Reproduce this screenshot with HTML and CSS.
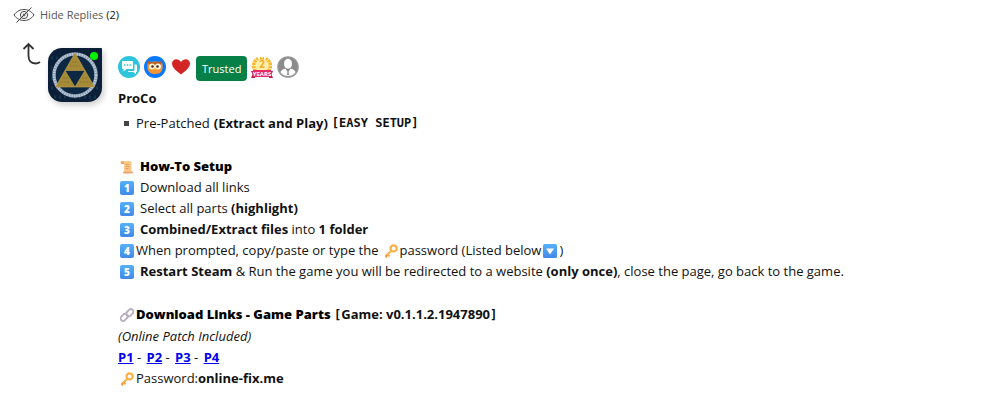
FILE: index.html
```html
<!DOCTYPE html>
<html lang="en">
<head>
  <meta charset="UTF-8">
  <meta name="viewport" content="width=device-width, initial-scale=1.0">
  <title>Replies</title>
  <link rel="stylesheet" href="styles.css">
</head>
<body>
  <!-- Shared icons -->
  <svg class="defs" width="0" height="0" aria-hidden="true">
    <defs>
      <linearGradient id="blue" x1="0" y1="0" x2="0" y2="1">
        <stop offset="0" stop-color="#56b0fa"/>
        <stop offset="1" stop-color="#4189e8"/>
      </linearGradient>
      <linearGradient id="gold" x1="1" y1="0" x2="0" y2="1">
        <stop offset="0" stop-color="#ffc83d"/>
        <stop offset="1" stop-color="#ee9548"/>
      </linearGradient>
      <symbol id="key" viewBox="0 0 14 14">
        <path d="M8 6 1.5 12.5M3.6 10.4l2 2M1.6 12.2l1.6 1" fill="none" stroke="url(#gold)" stroke-width="2"/>
        <circle cx="9.6" cy="4.4" r="3.1" fill="none" stroke="#fbb045" stroke-width="2.2"/>
      </symbol>
    </defs>
  </svg>

  <button class="hide-replies" type="button">
    <svg width="22" height="18" viewBox="0 0 22 18" fill="none" stroke="#444" stroke-width="1">
      <path d="M1 9C4 5 7.200 3.500 11 3.500s7 1.500 10 5.500c-3 4-6.200 5.500-10 5.500S4 13 1 9Z"/>
      <circle cx="11" cy="9" r="3.600"/>
      <circle cx="11" cy="9" r="1"/>
      <path d="M3.500 16.500 18.500 1.500"/>
    </svg>
    <span>Hide Replies <span class="count">(2)</span></span>
  </button>

  <div class="reply">
    <svg class="reply-arrow" width="20" height="24" viewBox="0 0 20 24" fill="none" stroke="#333" stroke-width="1.800">
      <path d="M6.500 2v12q0 7 7 7.500 2.500 0 4.500-1.500M1.500 7l5-5 5 5"/>
    </svg>

    <div class="avatar">
      <svg width="54" height="54" viewBox="0 0 54 54">
        <rect width="54" height="54" fill="#0b2038"/>
        <path d="M3 10h48M3 20h48M3 30h48M3 40h48M6 49h42" fill="none" stroke="#15354f" stroke-width="3" stroke-dasharray="2 3"/>
        <circle cx="27" cy="27" r="21" fill="#0d2843" stroke="#8598ad" stroke-width="3.500"/>
        <circle cx="27" cy="27" r="21" fill="none" stroke="#bccad8" stroke-width="2.500" stroke-dasharray="1.500 1"/>
        <path d="M27 5 17 22.500h20zM17 22.500 7.500 39H27zM37 22.500 27 39h19.500z" fill="#a58a38" stroke="#c4a34a" stroke-width=".6"/>
        <path d="M24 14h6M22 18h10M15 30h5M13 34h9M34 30h6M32 34h10" stroke="#8a7434" stroke-dasharray="2 1"/>
      </svg>
      <span class="online"></span>
    </div>

    <div class="content">
      <div class="badges">
        <svg width="22" height="22" viewBox="0 0 22 22">
          <circle cx="11" cy="11" r="11" fill="#2ec4dc"/>
          <path d="M16.500 8.500h1.500q1 0 1 1V15q0 1-1 1v2.500L15.500 16H11q-1 0-1-1h5.500q1 0 1-1z" fill="#fff"/>
          <path d="M5 5h9q1 0 1 1v6q0 1-1 1H8.500L5.500 15.500V13H5q-1 0-1-1V6q0-1 1-1Z" fill="#fff"/>
          <path d="M6 9h1.500M8.800 9h1.500M11.600 9h1.500" stroke="#2ec4dc" stroke-width="1.500"/>
        </svg>
        <svg width="22" height="22" viewBox="0 0 22 22">
          <circle cx="11" cy="11" r="11" fill="#0879fa"/>
          <path d="M4 6q7-1 14 0 1 3 .5 6.500-1 5.500-7.500 5.500T3.500 12.500Q3 9 4 6Z" fill="#f49432"/>
          <path d="M3.500 5q7.500 2.500 15 0L17 9H5z" fill="#b85e22"/>
          <circle cx="8" cy="10.500" r="3" fill="#fff4d8"/>
          <circle cx="14" cy="10.500" r="3" fill="#fff4d8"/>
          <circle cx="8.500" cy="10.500" r="1.300" fill="#4b2b1b"/>
          <circle cx="13.500" cy="10.500" r="1.300" fill="#4b2b1b"/>
          <path d="m10 12.500 1 2 1-2z" fill="#ffd75c"/>
        </svg>
        <svg class="heart" width="18" height="22" viewBox="0 0 18 22">
          <path d="M9 18.500C5 15 0 12 0 7.500 0 3 6 1.500 9 6c3-4.500 9-3 9 1.500 0 4.500-5 7.500-9 11Z" fill="#d32525"/>
        </svg>
        <span class="trusted">Trusted</span>
        <svg width="22" height="22" viewBox="0 0 22 22">
          <circle cx="11" cy="9.500" r="7" fill="#fff0a8"/>
          <path d="M4.500 15A8.200 8.200 0 0 1 7 2.500M17.500 15A8.200 8.200 0 0 0 15 2.500" fill="none" stroke="#f9b92a" stroke-width="3.500" stroke-dasharray="2.500 .6"/>
          <path d="m9 .5 2 1.500 2-1.500v3H9z" fill="#f9b51e"/>
          <text class="medal-number" x="11" y="12" text-anchor="middle">2</text>
          <path d="M0 15h4v7H0l1.500-3.500zM22 15h-4v7h4l-1.500-3.500z" fill="#b81f55"/>
          <path d="M2 14h18v7H2z" fill="#ea2866"/>
          <text class="medal-years" x="11" y="20" text-anchor="middle">YEARS</text>
        </svg>
        <svg width="22" height="22" viewBox="0 0 22 22">
          <circle cx="11" cy="11" r="10.200" fill="#8b8b8b" stroke="#999" stroke-width="1.200"/>
          <ellipse cx="11" cy="7.800" rx="4" ry="5" fill="#fff"/>
          <path d="M3.500 16.500q0-2.500 5-4l2.500 4 2.500-4q5 1.500 5 4-3 3.500-7.500 3.500T3.500 16.500Z" fill="#fff"/>
          <path d="M10 14h2l-.5 1.500L12 19h-2l.5-3.500z" fill="#8b8b8b"/>
        </svg>
      </div>

      <div class="author">ProCo</div>

      <ul class="features">
        <li>Pre-Patched <b>(Extract and Play)</b> <b class="mono">[EASY SETUP]</b></li>
      </ul>

      <div class="setup">
        <div class="line heading">
          <svg class="icon" width="14" height="14" viewBox="0 0 14 14">
            <path d="M1 1h9q1.500 0 1.500 1.500v9H4V4H1.500Q0 2.500 1 1Z" fill="#fcc988"/>
            <path d="M1 1.500h2q1 0 1 2.500H1.500Q.5 3 1 1.500ZM3 11.500h10V12q0 1.500-1.500 1.500H4Q3 13 3 11.500Z" fill="#ed9e66"/>
            <path d="M5.500 4.500h4M5.500 6.500h4M5.500 8.500h3" stroke="#dd9260" stroke-width=".8"/>
          </svg>
          <span class="spaced">How-To Setup</span>
        </div>
        <div class="line"><span class="keycap">1</span><span class="spaced">Download all links</span></div>
        <div class="line"><span class="keycap">2</span><span class="spaced">Select all parts <b>(highlight)</b></span></div>
        <div class="line"><span class="keycap">3</span><span class="spaced"><b>Combined/Extract files</b> into <b>1 folder</b></span></div>
        <div class="line">
          <span class="keycap">4</span>
          <span>When prompted, copy/paste or type the </span>
          <svg class="icon inline-key" width="14" height="14"><use href="#key"/></svg>
          <span>password (Listed below</span>
          <svg class="icon" width="14" height="14" viewBox="0 0 14 14">
            <rect width="14" height="14" rx="1.500" fill="url(#blue)"/>
            <path d="M3 4.500h8L7 10.500z" fill="#fff"/>
          </svg>
          <span>)</span>
        </div>
        <div class="line"><span class="keycap">5</span><span class="spaced"><b>Restart Steam</b> &amp; Run the game you will be redirected to a website <b>(only once)</b>, close the page, go back to the game.</span></div>
      </div>

      <div class="downloads">
        <div class="line">
          <svg class="icon" width="14" height="14" viewBox="0 0 14 14" fill="none" stroke="#b9aebf" stroke-width="1.800">
            <rect x="5.800" y="2.200" width="8" height="5" rx="2.500" transform="rotate(-45 9.800 4.700)"/>
            <rect x=".2" y="6.800" width="8" height="5" rx="2.500" transform="rotate(-45 4.200 9.300)"/>
          </svg>
          <span><span class="heading">Download Links - Game Parts</span> <b><span class="mono">[</span>Game: v0.1.1.2.1947890<span class="mono">]</span></b></span>
        </div>
        <div><i>(Online Patch Included)</i></div>
        <div><a href="#p1">P1</a> - <a href="#p2">P2</a> - <a href="#p3">P3</a> - <a href="#p4">P4</a></div>
        <div class="line">
          <svg class="icon" width="14" height="14"><use href="#key"/></svg>
          <span>Password:<b>online-fix.me</b></span>
        </div>
      </div>
    </div>
  </div>
</body>
</html>
```
FILE: styles.css
```css
body {
  margin: 0;
  padding: 6px 13px;
  font-family: "Open Sans", "Noto Sans", sans-serif;
  font-size: 13px;
  line-height: 21px;
  color: #111;
  background: #fff;
}

.defs {
  position: absolute;
}

.hide-replies {
  display: flex;
  align-items: center;
  gap: 5px;
  padding: 0;
  border: none;
  background: none;
  font-family: inherit;
  font-size: 11px;
  line-height: 18px;
  color: #555;
  cursor: pointer;
}

.count {
  color: #111;
}

.reply {
  display: flex;
  align-items: flex-start;
  margin-top: 18px;
}

.reply-arrow {
  flex: none;
  margin-left: 9px;
}

.avatar {
  position: relative;
  flex: none;
  width: 54px;
  height: 54px;
  margin: 6px 16px 0 6px;
  border-radius: 14px 1px 14px 14px;
  box-shadow: 2px 3px 6px rgba(0, 0, 0, 0.2);
}

.avatar svg {
  display: block;
  border-radius: inherit;
}

.online {
  position: absolute;
  top: 4px;
  right: 4px;
  width: 8px;
  height: 8px;
  border-radius: 50%;
  background: #00f000;
}

.content {
  flex: 1;
  padding-top: 14px;
}

.badges {
  display: flex;
  align-items: flex-start;
  gap: 4px;
}

.heart {
  margin: 0 2px;
}

.trusted {
  padding: 2px 6px;
  border-radius: 4px;
  background: #078048;
  color: #fff;
  font-size: 11px;
}

.author {
  margin-top: 7px;
  font-weight: 700;
}

.features {
  margin: 4px 0 22px;
  padding: 0;
  list-style: none;
}

.features li {
  display: flex;
  align-items: center;
  gap: 4px;
}

.features li::before {
  content: "";
  width: 5px;
  height: 5px;
  margin: 0 3px 0 6px;
  background: #444;
}

.line {
  display: flex;
  align-items: center;
}

.icon,
.keycap {
  flex: none;
  margin: 0 2px;
}

.keycap {
  width: 14px;
  height: 14px;
  border-radius: 2px;
  background: linear-gradient(#56b0fa, #4189e8);
  color: #fff;
  font-size: 10px;
  font-weight: 800;
  line-height: 14px;
  text-align: center;
}

.inline-key {
  margin-left: 5px;
}

.spaced {
  margin-left: 4px;
}

.heading {
  font-weight: 800;
  color: #000;
}

.mono {
  font-family: "DejaVu Sans Mono", monospace;
  font-size: 12px;
}

.downloads {
  margin-top: 22px;
}

.downloads a {
  font-weight: 700;
  color: #0000ee;
}

.downloads a + a {
  margin-left: 2px;
}

.medal-number {
  font-size: 10px;
  font-weight: 700;
  fill: #f9a91e;
}

.medal-years {
  font-size: 6px;
  font-weight: 700;
  fill: #fff;
}
```
